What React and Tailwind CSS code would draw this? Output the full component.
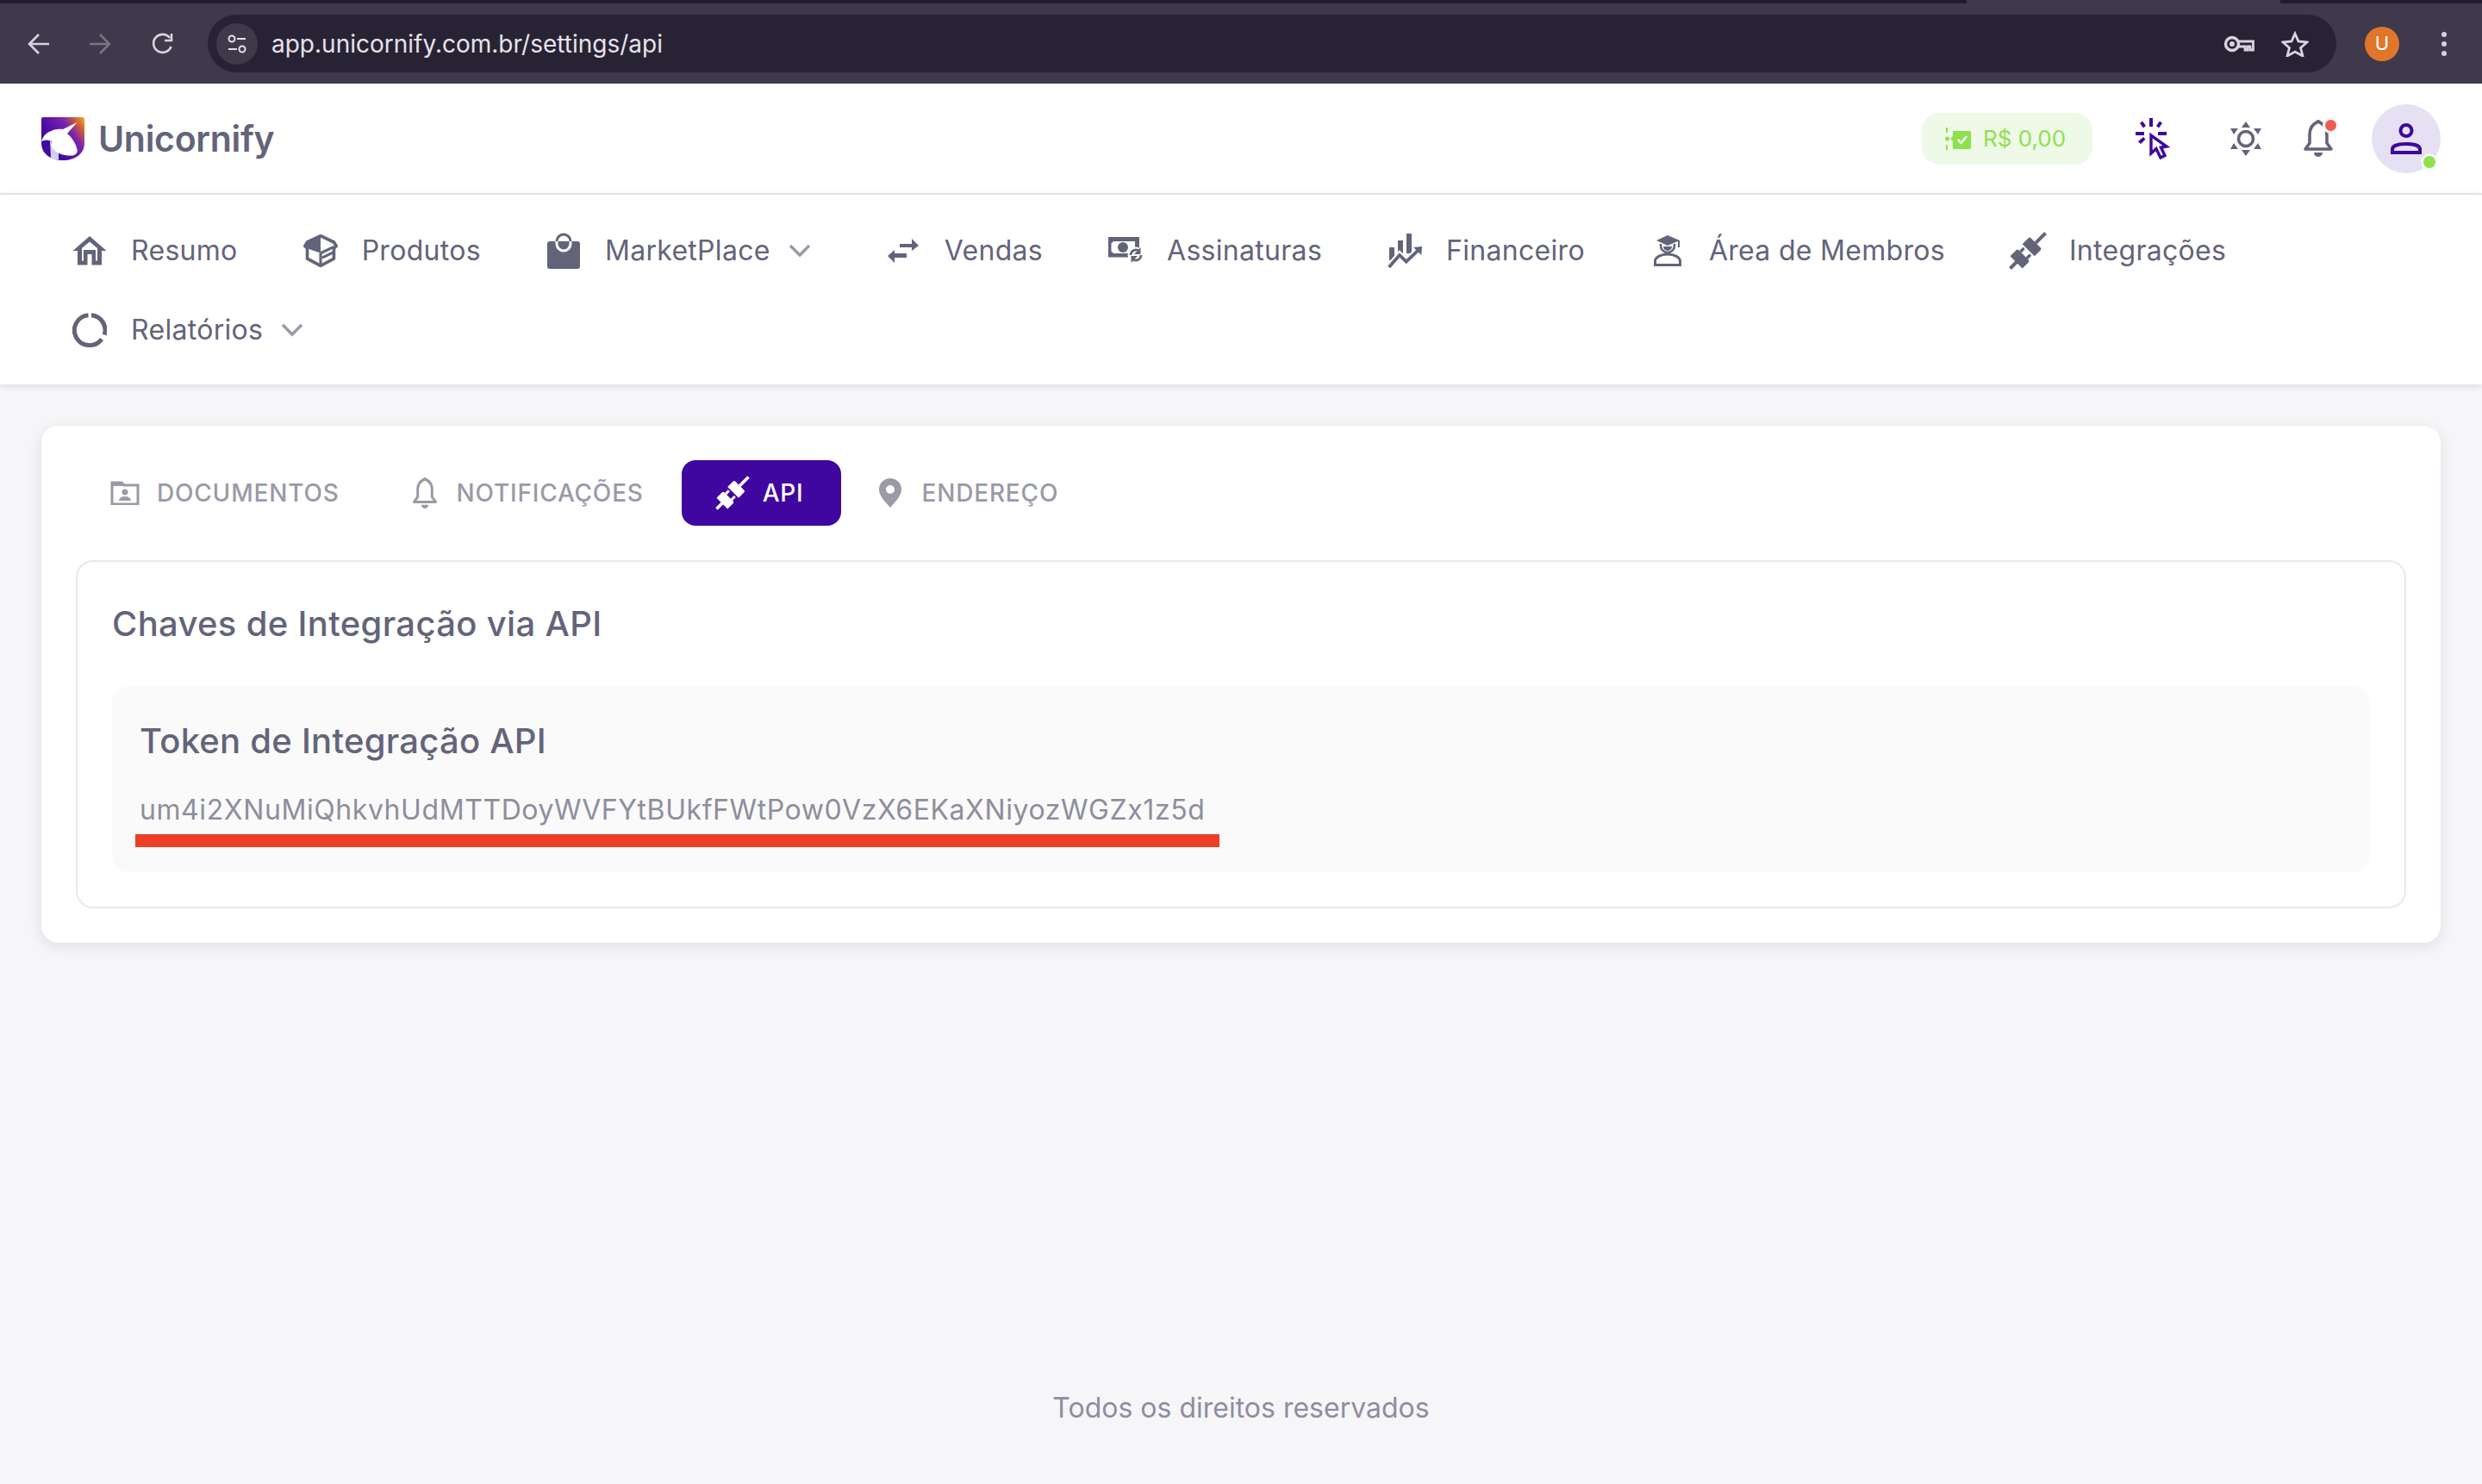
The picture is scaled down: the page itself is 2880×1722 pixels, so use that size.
import { useId } from "react";

const Chevron = () => (
  <svg width="26" height="16" viewBox="0 0 26 16" className="shrink-0">
    <path d="M2 2 L13 13 L24 2" fill="none" stroke="#9a9aa8" strokeWidth="3.4" />
  </svg>
);

const HomeIcon = () => (
  <svg width="40" height="34" viewBox="0 0 40 34">
    <path d="M20 0 L39.500 17 L34 17 L34 33.500 L22.500 33.500 L22.500 21 L17.500 21 L17.500 33.500 L6 33.500 L6 17 L0.500 17 Z" fill="#63647a" />
    <path d="M20 6.500 L29 14 L29 28.500 L27 28.500 L27 16 L13 16 L13 28.500 L11 28.500 L11 14 Z" fill="#fff" />
  </svg>
);

const BoxIcon = () => (
  <svg width="44" height="42" viewBox="0 0 44 42">
    <path d="M22 2 L39 10 L42 15 L39 18 L39 31 L22 40 L5 31 L5 18 L2 15 L5 10 Z" fill="none" stroke="#63647a" strokeWidth="4" strokeLinejoin="round" />
    <path d="M22 2 L5 10 L2 15 L5 18 L22 24 Z" fill="#63647a" />
    <path d="M22 24 L22 40 M22 24 L39 16 M24 30 L38 23" fill="none" stroke="#63647a" strokeWidth="3.400" />
  </svg>
);

const BagIcon = () => (
  <svg width="38" height="42" viewBox="0 0 38 42">
    <rect x="0" y="10" width="38" height="32" rx="3" fill="#63647a" />
    <path d="M11 10 A8 8 0 0 1 27 10" fill="none" stroke="#63647a" strokeWidth="3" />
    <path d="M11 10 V13 A8 8 0 0 0 27 13 V10" fill="none" stroke="#fff" strokeWidth="3" />
  </svg>
);

const SwapIcon = () => (
  <svg width="36" height="28" viewBox="0 0 36 28">
    <path d="M14 6 H28 V0 L36 8 L28 14 V10 H14 Z" fill="#63647a" />
    <path d="M22 17 H8 V13 L0 20 L8 28 V22 H22 Z" fill="#63647a" />
  </svg>
);

const MoneyIcon = () => (
  <svg width="40" height="32" viewBox="0 0 40 32">
    <rect x="0" y="0" width="36" height="23.500" fill="#63647a" />
    <path d="M6 5 H31 V19 H6 L3.500 16.500 V7.500 Z" fill="#fff" />
    <circle cx="17" cy="12" r="6" fill="#63647a" />
    <circle cx="32" cy="21" r="9.500" fill="#fff" />
    <path d="M26 21 A6 6 0 0 1 36 16.500 M38 21 A6 6 0 0 1 28 25.500" fill="none" stroke="#63647a" strokeWidth="2.600" />
    <path d="M37.500 12 V20 H30 Z M26.500 30 V22 H34 Z" fill="#63647a" />
  </svg>
);

const ChartIcon = () => (
  <svg width="40" height="40" viewBox="0 0 40 40">
    <path d="M2 16 H8 V31 H2 Z M12 8 H18 V27 H12 Z M22 0 H28 V23 H22 Z" fill="#63647a" />
    <path d="M1.700 39 L14 25 L21.700 32.700 L36.700 18.300" fill="none" stroke="#fff" strokeWidth="8" />
    <path d="M1.700 39 L14 25 L21.700 32.700 L36.700 18.300" fill="none" stroke="#63647a" strokeWidth="3.800" />
    <path d="M30 16 L40 15 L39.300 25 Z" fill="#63647a" />
  </svg>
);

const SchoolIcon = () => (
  <svg width="32" height="36" viewBox="0 0 32 36">
    <path d="M16 0 L30 6 L16 12 L3 6 Z" fill="#63647a" />
    <path d="M29 6 V14" stroke="#63647a" strokeWidth="2" />
    <path d="M8 10 V12 A8 8 0 0 0 24 12 V10" fill="none" stroke="#63647a" strokeWidth="2.600" />
    <path d="M11 13 A5 5 0 0 0 21 13 Z" fill="#63647a" />
    <path d="M1.500 34.500 V30 A14.500 8 0 0 1 30.500 30 V34.500 Z" fill="none" stroke="#63647a" strokeWidth="3" />
  </svg>
);

const PlugIcon = ({ color = "#63647a", size = 42 }) => (
  <svg width={size} height={size} viewBox="0 0 42 42" className="overflow-visible">
    <g fill={color} transform="rotate(-45 21 21)">
      <rect x="-8" y="19" width="11" height="4" />
      <path d="M2 11 H12 A2 2 0 0 1 14 13 V29 A2 2 0 0 1 12 31 H2 Z" />
      <rect x="14" y="14" width="6" height="3.400" />
      <rect x="14" y="24.600" width="6" height="3.400" />
      <path d="M22 11 H32 A2 2 0 0 1 34 13 V29 A2 2 0 0 1 32 31 H22 Z" />
      <rect x="34" y="19" width="16" height="4" />
    </g>
  </svg>
);

const ReportIcon = () => (
  <svg width="40" height="40" viewBox="0 0 40 40">
    <path d="M18.500 2.700 A17.500 17.500 0 1 0 34 30.500" fill="none" stroke="#63647a" strokeWidth="5" />
    <path d="M22 2.800 A17.500 17.500 0 0 1 37.200 25.500" fill="none" stroke="#63647a" strokeWidth="5" />
  </svg>
);

const Logo = () => {
  const id = useId();
  return (
    <svg width="50" height="50" viewBox="0 0 50 50" className="shrink-0">
      <defs>
        <linearGradient id={id} x1="10" y1="28" x2="50" y2="0" gradientUnits="userSpaceOnUse">
          <stop offset="0" stopColor="#4208a2" />
          <stop offset="0.55" stopColor="#7d22ad" />
          <stop offset="0.8" stopColor="#d0642f" />
          <stop offset="1" stopColor="#f8ac3c" />
        </linearGradient>
      </defs>
      <path d="M0 2 A2 2 0 0 1 2 0 H48 A2 2 0 0 1 50 2 V30 C50 42 40 50 25 50 C10 50 0 42 0 30 Z" fill={`url(#${id})`} />
      <path d="M10 27 L11 47 Q15 50 20 50 L20 40 Z" fill="#ced0ee" />
      <path d="M41.700 5.700 L30 19 C35 23 40 30 41.700 38 C42 42 39 44.500 35 44.500 C27 45 18 42 15 38 C11 35 11 31 12 28 C8 26 4 26 0 28 C2 22 5 19 9 17 C14 14 20 13 25 14 Z" fill="#fff" />
    </svg>
  );
};

const CursorClick = () => (
  <svg width="36" height="48" viewBox="0 0 36 48" className="overflow-visible">
    <g fill="#3f07a0">
      <rect x="16" y="0" width="4" height="10" />
      <rect x="0" y="16" width="10" height="4" />
      <rect x="26" y="16" width="10" height="4" />
      <path d="M5 6 L8 3.500 L12 9 L9 11.500 Z M31 6 L28 3.500 L24 9 L27 11.500 Z M3 27 L9 22 L11.500 24.500 L6 30 Z" />
    </g>
    <path d="M18 20 L18 41 L24 35.500 L29 46 L34 43.500 L29.500 34 L36 33 Z" fill="#fff" stroke="#3f07a0" strokeWidth="3.400" />
  </svg>
);

const SunIcon = () => (
  <svg width="36" height="40" viewBox="0 0 36 40">
    <circle cx="18" cy="20" r="8.500" fill="none" stroke="#63647a" strokeWidth="3.600" />
    <path d="M18 0 L23 7 H13 Z M18 40 L13 33 H23 Z M0 8 L9 8 L4 15 Z M36 8 L27 8 L32 15 Z M0 32 L4 25 L9 32 Z M36 32 L32 25 L27 32 Z" fill="#63647a" />
  </svg>
);

const BellIcon = ({ color = "#63647a", w = 36, h = 43 }) => (
  <svg width={w} height={h} viewBox="0 0 36 43">
    <path d="M18 2 C11 5 8 10 8 17 V27 L3 34 H33 L28 27 V17 C28 10 25 5 18 2 Z" fill="none" stroke={color} strokeWidth="3.600" strokeLinejoin="round" />
    <rect x="16" y="0" width="4" height="4" rx="2" fill={color} />
    <path d="M13 38 H23 A5 5 0 0 1 13 38 Z" fill={color} />
  </svg>
);

const UserIcon = () => (
  <svg width="36" height="36" viewBox="0 0 36 36">
    <ellipse cx="18" cy="8.500" rx="6.500" ry="6.500" fill="none" stroke="#3f07a0" strokeWidth="4" />
    <path d="M2 34 V30 C2 26 9 24 18 24 C27 24 34 26 34 30 V34 Z" fill="none" stroke="#3f07a0" strokeWidth="4" />
  </svg>
);

const WalletIcon = () => (
  <svg width="30" height="26" viewBox="0 0 30 26">
    <path d="M2 0 V6 M2 20 V26" stroke="#8fe04e" strokeWidth="2" />
    <circle cx="2.500" cy="13" r="2.500" fill="#8fe04e" />
    <path d="M9 5 A1 1 0 0 1 10 4 H29 A1 1 0 0 1 30 5 V24 A1 1 0 0 1 29 25 H10 A1 1 0 0 1 9 24 V16 L6 13 L9 10 Z" fill="#8fe04e" />
    <path d="M15 14 L18.500 18 L25 10" fill="none" stroke="#fff" strokeWidth="2.400" />
  </svg>
);

const FolderIcon = () => (
  <svg width="34" height="28" viewBox="0 0 34 28">
    <path d="M2 27 V2 H13 L16 5 H32 V27 Z" fill="none" stroke="#9a9aa8" strokeWidth="3" />
    <path d="M2 2 H13 L16 6 H2 Z" fill="#9a9aa8" />
    <circle cx="17" cy="13" r="3.500" fill="#9a9aa8" />
    <path d="M10 23 A7 5 0 0 1 24 23 Z" fill="#9a9aa8" />
  </svg>
);

const PinIcon = () => (
  <svg width="26" height="34" viewBox="0 0 26 34">
    <path fillRule="evenodd" d="M13 0 A13 13 0 0 1 26 13 C26 21 18 28 13 34 C8 28 0 21 0 13 A13 13 0 0 1 13 0 Z M13 8 A5 5 0 1 0 13 18 A5 5 0 1 0 13 8 Z" fill="#9a9aa8" />
  </svg>
);

const navItems = [
  { label: "Resumo", icon: <HomeIcon /> },
  { label: "Produtos", icon: <BoxIcon /> },
  { label: "MarketPlace", icon: <BagIcon />, more: true },
  { label: "Vendas", icon: <SwapIcon /> },
  { label: "Assinaturas", icon: <MoneyIcon /> },
  { label: "Financeiro", icon: <ChartIcon /> },
  { label: "Área de Membros", icon: <SchoolIcon /> },
  { label: "Integrações", icon: <PlugIcon /> },
  { label: "Relatórios", icon: <ReportIcon />, more: true },
];

function BrowserBar() {
  return (
    <div className="bg-[#3e3a4b] h-[97px] shrink-0">
      <div className="h-[4px] flex">
        <div className="w-[2282px] bg-[#211c2e]" />
        <div className="flex-1" />
        <div className="w-[234px] bg-[#211c2e]" />
      </div>
      <div className="h-[93px] flex items-center pl-[32px] pr-[41px]">
        <svg width="26" height="26" viewBox="0 0 26 26" className="shrink-0">
          <path d="M25 13 H2 M13 2 L2 13 L13 24" fill="none" stroke="#d8d3e2" strokeWidth="2.600" />
        </svg>
        <svg width="26" height="26" viewBox="0 0 26 26" className="ml-[45px] shrink-0">
          <path d="M1 13 H24 M13 2 L24 13 L13 24" fill="none" stroke="#797585" strokeWidth="2.600" />
        </svg>
        <svg width="26" height="26" viewBox="0 0 26 26" className="ml-[47px] shrink-0">
          <path d="M22.500 16 A10.500 10.500 0 1 1 21 6" fill="none" stroke="#d8d3e2" strokeWidth="2.600" />
          <path d="M23 1 V9 H15" fill="none" stroke="#d8d3e2" strokeWidth="2.600" />
        </svg>
        <div className="ml-[39px] h-[67px] flex-1 rounded-full bg-[#282334] flex items-center pl-[10px] pr-[32px]">
          <div className="w-[48px] h-[48px] rounded-full bg-[#3e3a4b] flex items-center justify-center shrink-0">
            <svg width="24" height="24" viewBox="0 0 24 24">
              <circle cx="6" cy="6" r="3.500" fill="none" stroke="#e3dfe9" strokeWidth="2" />
              <path d="M12 6 H22 M2 18 H12" stroke="#e3dfe9" strokeWidth="2" />
              <circle cx="18" cy="18" r="3.500" fill="none" stroke="#e3dfe9" strokeWidth="2" />
            </svg>
          </div>
          <span className="ml-[16px] text-[#e7e3ec] text-[28px] leading-none">app.unicornify.com.br/settings/api</span>
          <div className="ml-auto flex items-center gap-[31px]">
            <svg width="36" height="22" viewBox="0 0 36 22">
              <circle cx="10" cy="11" r="7.500" fill="none" stroke="#d8d3e2" strokeWidth="3.400" />
              <circle cx="10" cy="11" r="3" fill="#d8d3e2" />
              <path d="M17 8 H34.500 V18 H31 V14 H28 V18 H25 V14 H17" fill="none" stroke="#d8d3e2" strokeWidth="2.800" />
            </svg>
            <svg width="32" height="30" viewBox="0 0 32 30">
              <path d="M16 3 L20 12 L30 13 L22.500 19.500 L25 29 L16 24 L7 29 L9.500 19.500 L2 13 L12 12 Z" fill="none" stroke="#d8d3e2" strokeWidth="2.800" />
            </svg>
          </div>
        </div>
        <div className="ml-[33px] w-[40px] h-[40px] rounded-full bg-[#e0762a] flex items-center justify-center text-white text-[22px] shrink-0">U</div>
        <div className="ml-[49px] flex flex-col gap-[5px] shrink-0">
          <span className="w-[6px] h-[6px] rounded-full bg-[#d8cfe4]" />
          <span className="w-[6px] h-[6px] rounded-full bg-[#d8cfe4]" />
          <span className="w-[6px] h-[6px] rounded-full bg-[#d8cfe4]" />
        </div>
      </div>
    </div>
  );
}

function TopBar() {
  return (
    <header className="h-[129px] bg-white border-b-2 border-[#e8e8e8] flex items-center justify-between px-[48px] shrink-0">
      <div className="flex items-center gap-[16px]">
        <Logo />
        <span className="text-[41px] font-semibold text-[#63647a] leading-none tracking-[-0.3px] pt-[2px]">Unicornify</span>
      </div>
      <div className="flex items-center">
        <div className="w-[198px] h-[60px] rounded-[20px] bg-[#eff9e8] flex items-center pl-[27px] gap-[14px]">
          <WalletIcon />
          <span className="text-[26px] text-[#8fe04e]">R$ 0,00</span>
        </div>
        <div className="ml-[50px]"><CursorClick /></div>
        <div className="ml-[74px]"><SunIcon /></div>
        <div className="ml-[48px] relative">
          <BellIcon />
          <span className="absolute top-[-3px] right-[-6px] w-[19px] h-[19px] rounded-full bg-[#ef5b4f] border-[3px] border-[#f6f6f9]" />
        </div>
        <div className="ml-[44px] relative w-[80px] h-[80px] rounded-full bg-[#e6e0f3] flex items-center justify-center">
          <UserIcon />
          <span className="absolute bottom-[3px] right-[3px] w-[20px] h-[20px] rounded-full bg-[#8fe04e] border-[3px] border-[#f6f6f9]" />
        </div>
      </div>
    </header>
  );
}

function NavBar() {
  return (
    <nav className="bg-white h-[220px] pl-[84px] pr-[48px] pt-[19px] flex flex-wrap content-start gap-x-[76px] shadow-[0_2px_8px_rgba(60,60,80,0.14)] shrink-0 relative">
      {navItems.map((item) => (
        <a key={item.label} className="h-[92px] flex items-center text-[32px] text-[#63647a] tracking-[0.3px]">
          <span className="w-[40px] flex justify-center shrink-0">{item.icon}</span>
          <span className="ml-[28px]">{item.label}</span>
          {item.more && <span className="ml-[21px] mr-[11px]"><Chevron /></span>}
        </a>
      ))}
    </nav>
  );
}

function Tabs() {
  return (
    <div className="flex gap-[4px] h-[76px]">
      <button className="px-[40px] flex items-center gap-[20px] text-[28px] font-medium text-[#9a9aa8] tracking-[0.8px]">
        <FolderIcon /> DOCUMENTOS
      </button>
      <button className="px-[40px] flex items-center gap-[22px] text-[28px] font-medium text-[#9a9aa8] tracking-[0.8px]">
        <BellIcon color="#9a9aa8" w={30} h={38} /> NOTIFICAÇÕES
      </button>
      <button className="pl-[40px] pr-[43px] flex items-center gap-[16px] text-[28px] font-medium text-white tracking-[0.8px] bg-[#3f07a0] rounded-[16px]">
        <PlugIcon color="#fff" size={38} /> API
      </button>
      <button className="px-[40px] flex items-center gap-[24px] text-[28px] font-medium text-[#9a9aa8] tracking-[0.8px]">
        <PinIcon /> ENDEREÇO
      </button>
    </div>
  );
}

export default function App() {
  return (
    <div className="w-full min-h-screen bg-[#f6f6f9] flex flex-col font-[Inter,sans-serif]">
      <BrowserBar />
      <TopBar />
      <NavBar />
      <main className="flex-1 px-[48px] pt-[48px]">
        <section className="bg-white rounded-[20px] p-[40px] shadow-[0_4px_16px_rgba(60,60,80,0.12)]">
          <Tabs />
          <div className="mt-[40px] border-2 border-[#e9e9ec] rounded-[20px] px-[40px] pt-[42px] pb-[40px]">
            <h2 className="text-[40px] leading-[60px] text-[#63647a] font-medium tracking-[0.33px]">Chaves de Integração via API</h2>
            <div className="mt-[42px] bg-[#fafafa] rounded-[20px] px-[32px] pt-[40px] pb-[29px]">
              <h3 className="text-[40px] leading-[48px] text-[#63647a] font-medium tracking-[0.25px]">Token de Integração API</h3>
              <p className="mt-[36px] text-[32px] leading-[40px] text-[#8e8e9e] tracking-[0.58px]">um4i2XNuMiQhkvhUdMTTDoyWVFYtBUkfFWtPow0VzX6EKaXNiyozWGZx1z5d</p>
              <div className="mt-[8px] -ml-[5px] w-[1258px] h-[15px] bg-[#ec3f25]" />
            </div>
          </div>
        </section>
      </main>
      <footer className="pb-[68px] text-center text-[32px] leading-[40px] text-[#8e8e9e]">Todos os direitos reservados</footer>
    </div>
  );
}
